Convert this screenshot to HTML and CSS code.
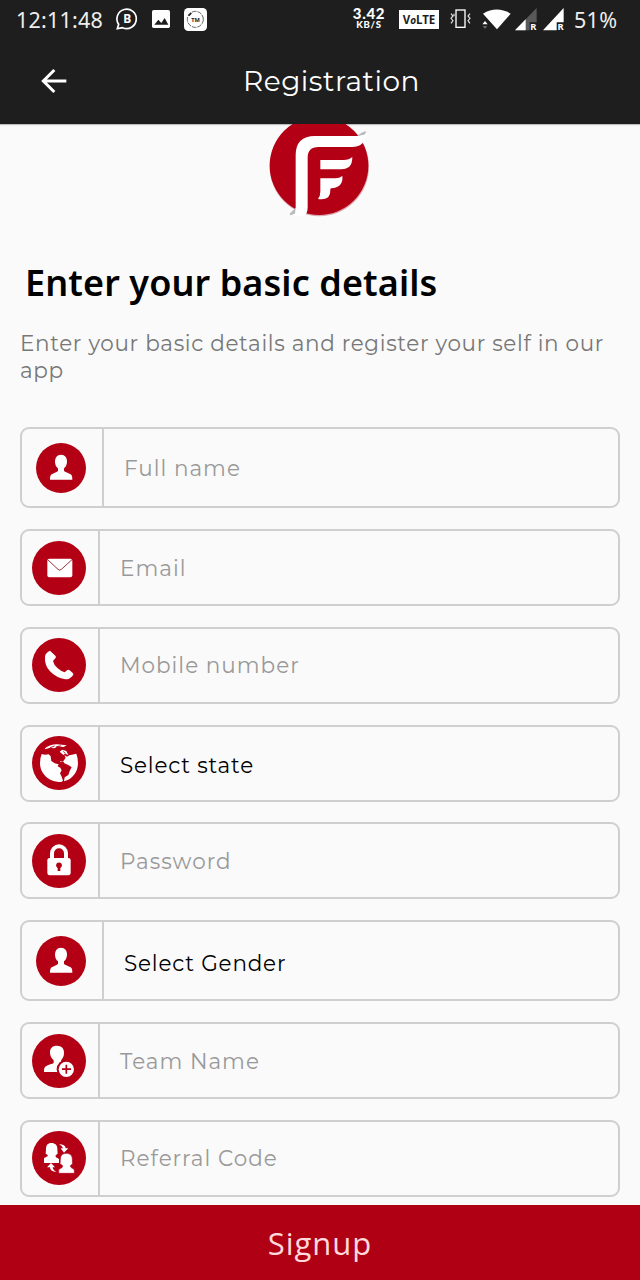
FILE: index.html
```html
<!DOCTYPE html>
<html lang="en">
<head>
<meta charset="utf-8">
<title>Registration</title>
<link rel="stylesheet" href="styles.css">
</head>
<body>
<svg width="0" height="0" class="defs">
  <symbol id="person" viewBox="0 0 150 150">
    <circle cx="75" cy="75" r="75" fill="#b30015"/>
    <path fill="#fff" d="M75 35c12 0 18 9 18 21 0 9-4 16-9 20v7c0 3 16 7 20 11 5 4 5 10 5 16H42c0-6 0-12 5-16 5-4 19-8 19-11v-7c-5-4-9-11-9-20 0-12 6-21 18-21z"/>
  </symbol>
</svg>
<header>
  <div class="status">
    <span class="clock">12:11:48</span>
    <svg class="s-chat" width="22" height="22" viewBox="0 0 66 66"><path d="M4 62l4-13a29 29 0 1 1 12 10z" fill="none" stroke="#fff" stroke-width="5"/><text x="34" y="45" class="glyph b">B</text></svg>
    <svg class="s-pic" width="18" height="18" viewBox="0 0 54 54"><rect width="54" height="54" rx="5" fill="#fff"/><path d="M7 44l12-15 9 10 10-15 11 20z" fill="#1e1e1e"/></svg>
    <svg class="s-app" width="23" height="23" viewBox="0 0 69 69"><rect width="69" height="69" rx="13" fill="#fff"/><circle cx="34" cy="34" r="24" fill="none" stroke="#444" stroke-width="2.5" stroke-dasharray="14 3"/><path d="M14 23l8-8" stroke="#222" stroke-width="5"/><text x="35" y="41" class="glyph tm">TM</text></svg>
    <div class="speed"><b>3.42</b><b class="unit">KB/S</b></div>
    <div class="volte">V<i>o</i>LTE</div>
    <svg class="s-vib" width="21" height="20" viewBox="0 0 63 60"><rect x="18" y="3" width="27" height="52" fill="none" stroke="#fff" stroke-width="4"/><path d="M3 14l6 7-6 7 6 7-6 8M12 14v8M60 14l-6 7 6 7-6 7 6 8" fill="none" stroke="#ddd" stroke-width="3.5"/></svg>
    <svg class="s-wifi" width="29" height="21" viewBox="0 0 87 63"><path d="M3 14Q44-11 86 14L45 61z" fill="#fff"/><path d="M1 46h16l-8-10z" fill="#fff"/><path d="M2 51h14l-7 9z" fill="#666"/></svg>
    <svg class="s-sig" width="22" height="23" viewBox="0 0 66 69"><path d="M0 67L65 0v43H44v24z" fill="#595959"/><path d="M0 67l32-33v33z" fill="#fff"/><text x="55" y="66" class="glyph r">R</text></svg>
    <svg class="s-sig2" width="22" height="23" viewBox="0 0 66 69"><path d="M0 67L62 0v43H41v24z" fill="#fff"/><text x="53" y="66" class="glyph r">R</text></svg>
    <span class="battery">51%</span>
  </div>
  <div class="appbar">
    <svg class="back" width="28" height="26" viewBox="0 0 84 78"><path d="M79 39H10M43 6L10 39l33 33" fill="none" stroke="#fff" stroke-width="9"/></svg>
    <h1>Registration</h1>
  </div>
</header>
<main>
  <svg class="logo" width="104" height="94" viewBox="112 192 312 282">
    <circle cx="269" cy="320" r="149" fill="#dcaab0"/>
    <circle cx="268" cy="317" r="148" fill="#b30015"/>
    <path d="M382 229q14-14 28-15l-5 12zM180 461l18-18 4 16-20 7z" fill="#bbb"/>
    <path fill="#fff" d="M256 228h130q14 0 26-8-4 26-21 36-10 5-22 5H266q-32 0-32 32v148q0 18-9 27H192q6-9 6-24V286q0-58 58-58z"/>
    <path fill="#fff" d="M272 300h70q16 0 26-9 0 22-10 30-10 7-23 7h-63zM272 355h45q12 0 21-7 2 17-7 27-8 9-26 10-3 0-3 4 0 21-12 26-10 4-25 2 7-9 7-22z"/>
  </svg>
  <h2>Enter your basic details</h2>
  <p>Enter your basic details and register your self in our<br>app</p>
  <form>
    <div class="field small"><div class="icon"><svg><use href="#person"/></svg></div><span>Full name</span></div>
    <div class="field"><div class="icon"><svg viewBox="0 0 162 162"><circle cx="81" cy="81" r="81" fill="#b30015"/><rect x="46" y="53" width="75" height="56" rx="6" fill="#fff"/><path d="M47 56l31 29q5 5 10 0l32-29" fill="none" stroke="#9c3040" stroke-width="3"/></svg></div><span>Email</span></div>
    <div class="field"><div class="icon"><svg viewBox="0 0 162 162"><circle cx="81" cy="81" r="81" fill="#b30015"/><path d="M54 38l16 15q4 4 0 8l-7 8q2 11 14 22 10 9 21 12l7-6q4-4 8 0l10 9q3 3-1 7-10 12-22 11-27-4-46-24-17-19-15-44 0-7 6-12 5-5 9-6z" fill="#fff"/></svg></div><span>Mobile number</span></div>
    <div class="field"><div class="icon"><svg viewBox="0 0 162 162"><circle cx="81" cy="81" r="81" fill="#b30015"/>
      <path fill="#fff" d="M29 54l10 2 11-1 6 6 2 14 10 7 12 3-3 6 8 4 4 8-5 9 5 10 4 12-5 4C51 139 24 113 24 81q0-15 5-27z"/>
      <path fill="#fff" d="M84 79l11-5 6-9-4-8 8 5 7-4 8-2 13-3q5 13 5 28c0 27-17 49-42 55l2-12 11-7 5-14 5-9-10-7-12-5-4-7-8 1z"/>
      <path fill="#fff" d="M39 37q15-12 36-12l29 3-9 5-17-2-11 6-12-2-16 5zM83 47l8-6 12 4 6 12-10-4-5 4z"/>
      <path d="M54 35l14-5M72 33l14-4M94 46l6 7" stroke="#b30015" stroke-width="2.5"/></svg></div><span class="dark">Select state</span></div>
    <div class="field"><div class="icon"><svg viewBox="0 0 162 162"><circle cx="81" cy="81" r="81" fill="#b30015"/><path d="M60 75V58a21 21 0 0 1 42 0v17" fill="none" stroke="#fff" stroke-width="12"/><rect x="46" y="72" width="70" height="52" rx="7" fill="#fff"/><circle cx="81" cy="94" r="8.5" fill="#b30015"/><path d="M77 96h8v15h-8z" fill="#b30015"/></svg></div><span>Password</span></div>
    <div class="field small"><div class="icon"><svg><use href="#person"/></svg></div><span class="dark">Select Gender</span></div>
    <div class="field"><div class="icon"><svg viewBox="0 0 162 162"><circle cx="81" cy="81" r="81" fill="#b30015"/><path d="M75 35c14 0 22 9 21 23 0 11-5 16-9 22v9l-8 25H36c0-8 0-14 7-18 8-4 18-6 22-9v-8c-6-6-10-11-11-22-1-14 7-22 21-22z" fill="#fff"/><circle cx="103" cy="106" r="29" fill="#b30015"/><circle cx="103" cy="106" r="23" fill="#fff"/><path d="M103 92v27M90 105.500h27" stroke="#b30015" stroke-width="5"/></svg></div><span>Team Name</span></div>
    <div class="field"><div class="icon"><svg viewBox="0 0 162 162"><circle cx="81" cy="81" r="81" fill="#b30015"/><path d="M58 36c12 0 18 7 18 18l1 14-6 5v5l10 6v12H36V84c0-6 11-6 11-9v-3l-6-4 1-14c0-11 5-18 16-18z" fill="#fff"/><path d="M103 67c12 0 18 7 18 18l1 14-6 4v5c2 4 11 4 11 10v9H80v-9c0-6 11-6 11-10v-5l-7-4 1-14c0-11 6-18 18-18z" fill="#fff" stroke="#b30015" stroke-width="2"/><path d="M81 40q19 0 20 12h8L96 65 86 52h7q-2-7-12-12zM74 123q-21-2-20-14h-9l12-13 12 13h-7q0 8 12 14z" fill="#fff"/></svg></div><span>Referral Code</span></div>
  </form>
</main>
<footer><span>Signup</span></footer>
</body>
</html>
```
FILE: styles.css
```css
* { box-sizing: border-box; }
body {
  margin: 0;
  width: 640px;
  height: 1280px;
  display: flex;
  flex-direction: column;
  overflow: hidden;
  background: #fafafa;
  font-family: Montserrat, Inter, sans-serif;
}
.defs { display: none; }
header { height: 124px; flex: none; background: #1e1e1e; color: #fff; box-shadow: 0 1px 1px #8888; }
.status { height: 40px; display: flex; align-items: center; padding: 0 0 2px 16px; font-family: "Noto Sans", sans-serif; white-space: nowrap; }
.status > * { flex: none; }
.status svg { overflow: visible; }
.glyph { font-family: "Noto Sans", sans-serif; font-weight: 700; text-anchor: middle; fill: #fff; }
.b { font-size: 36px; }
.tm { font-size: 17px; fill: #222; }
.r { font-size: 28px; }
.clock { width: 100px; font-size: 21.5px; letter-spacing: 0.2px; color: #eee; }
.s-pic { margin-left: 14px; }
.s-app { margin-left: 14px; }
.speed { width: 36px; margin-left: 144px; display: flex; flex-direction: column; align-items: center; font: 700 15px/12px Lato, sans-serif; letter-spacing: 0.7px; padding-bottom: 2px; }
.speed .unit { font-size: 9.5px; line-height: 11px; }
.volte { margin-left: 12px; width: 40px; height: 19px; background: #fff; color: #1e1e1e; font-size: 11.5px; line-height: 19px; font-weight: 700; text-align: center; }
.volte i { font-size: 10px; }
.s-vib { margin-left: 11px; }
.s-wifi { margin-left: 11px; }
.s-sig { margin-left: 4px; }
.s-sig2 { margin-left: 6px; }
.battery { margin-left: 9px; font-size: 21.5px; letter-spacing: 0.3px; color: #eee; }
.appbar { height: 84px; display: flex; align-items: center; padding: 0 0 2px 40px; }
h1 { margin: 0 0 0 175px; font-size: 28px; font-weight: 400; letter-spacing: 0.5px; line-height: 40px; }
main { flex: 1; padding: 0 20px; display: flex; flex-direction: column; }
.logo { display: block; margin-left: 247px; }
h2 { margin: 40px 0 0 5px; font: 600 36px/50px "Noto Sans", sans-serif; letter-spacing: 0.1px; white-space: nowrap; color: #000; }
p { margin: 22px 0 0; font-size: 21.5px; line-height: 27px; letter-spacing: 0.65px; color: #777; white-space: nowrap; }
form { margin-top: 43.3px; display: flex; flex-direction: column; gap: 20.8px; }
.field { height: 77px; flex: none; border: 2px solid #cfcfcf; border-radius: 9px; display: flex; align-items: center; font-size: 21.5px; letter-spacing: 1px; color: #999; }
.field.small { height: 81px; }
.icon { align-self: stretch; width: 78px; border-right: 2px solid #cfcfcf; display: flex; align-items: center; padding-left: 10px; }
.icon svg { width: 54px; height: 54px; }
.small .icon { width: 82px; padding-left: 14px; }
.small .icon svg { width: 50px; height: 50px; }
.field span { margin-left: 20px; }
.field .dark { color: #000; padding-top: 4px; letter-spacing: 0.8px; }
footer { flex: none; height: 75px; background: #b00014; color: #ffd9dc; display: flex; align-items: center; justify-content: center; font: 400 31px "Open Sans", sans-serif; letter-spacing: 1px; }
```
